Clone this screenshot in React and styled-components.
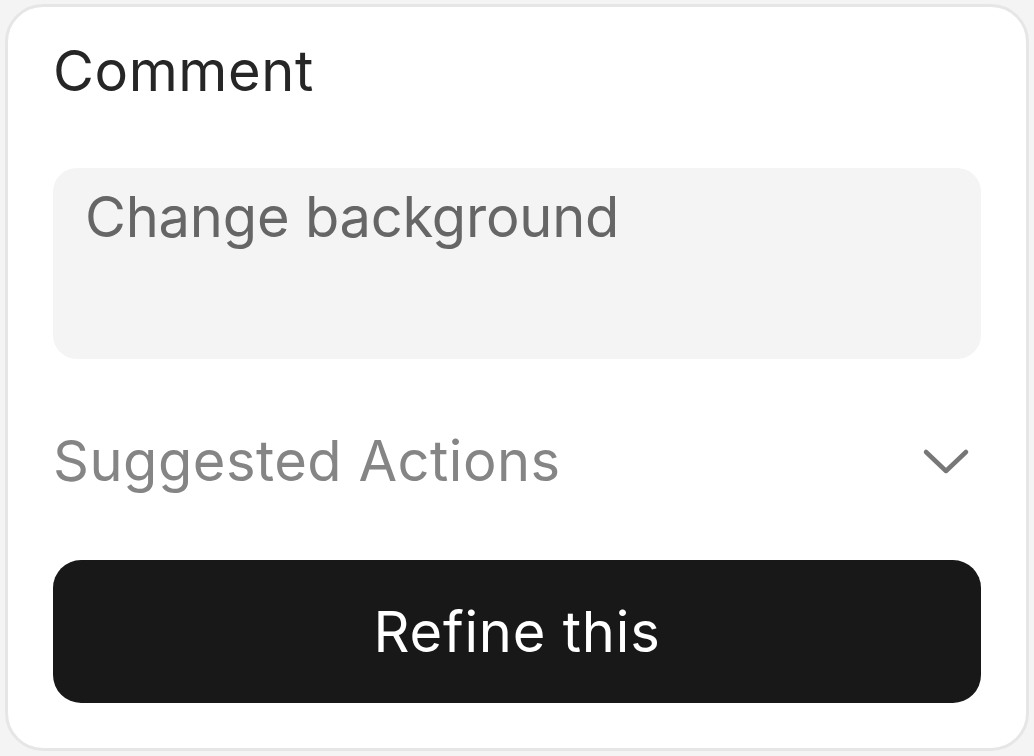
import styled, { createGlobalStyle } from "styled-components";

const GlobalStyle = createGlobalStyle`
  html, body {
    margin: 0;
    padding: 0;
    background: #f4f4f4;
    font-family: Inter, "Noto Sans", sans-serif;
  }
`;

const Page = styled.div`
  width: 1034px;
  height: 756px;
  padding: 4px 5px 5px 5px;
  box-sizing: border-box;
`;

const Card = styled.div`
  width: 100%;
  height: 100%;
  box-sizing: border-box;
  background: #ffffff;
  border: 3px solid #e6e6e6;
  border-radius: 38px;
  padding: 31px 45px 0 45px;
  display: flex;
  flex-direction: column;
`;

const Title = styled.h2`
  margin: 0;
  font-size: 56px;
  line-height: 1.2;
  font-weight: 400;
  letter-spacing: 0.6px;
  color: #262626;
`;

const CommentBox = styled.textarea`
  margin-top: 63px;
  height: 191px;
  box-sizing: border-box;
  border: none;
  outline: none;
  resize: none;
  background: #f4f4f4;
  border-radius: 24px;
  padding: 16px 32px;
  font-family: inherit;
  font-size: 56px;
  line-height: 1.2;
  letter-spacing: -0.2px;
  color: #262626;

  &::placeholder {
    color: #666666;
  }
`;

const ActionsRow = styled.div`
  margin-top: 69px;
  display: flex;
  align-items: center;
  justify-content: space-between;
  padding-right: 11px;
`;

const ActionsLabel = styled.span`
  font-size: 56px;
  line-height: 1.2;
  letter-spacing: 0.5px;
  color: #858585;
`;

const Chevron = styled.svg`
  width: 48px;
  height: 28px;
`;

const RefineButton = styled.button`
  margin-top: 65px;
  height: 143px;
  border: none;
  border-radius: 28px;
  background: #181818;
  color: #ffffff;
  font-family: inherit;
  font-size: 56px;
  font-weight: 400;
  letter-spacing: 0.8px;
  cursor: pointer;
`;

export default function App() {
  return (
    <>
      <GlobalStyle />
      <Page>
        <Card>
          <Title>Comment</Title>
          <CommentBox placeholder="Change background" />
          <ActionsRow>
            <ActionsLabel>Suggested Actions</ActionsLabel>
            <Chevron viewBox="0 0 48 28" fill="none">
              <path
                d="M4 4 L24 23 L44 4"
                stroke="#777777"
                strokeWidth="4.5"
                strokeLinecap="round"
                strokeLinejoin="round"
              />
            </Chevron>
          </ActionsRow>
          <RefineButton>Refine this</RefineButton>
        </Card>
      </Page>
    </>
  );
}
